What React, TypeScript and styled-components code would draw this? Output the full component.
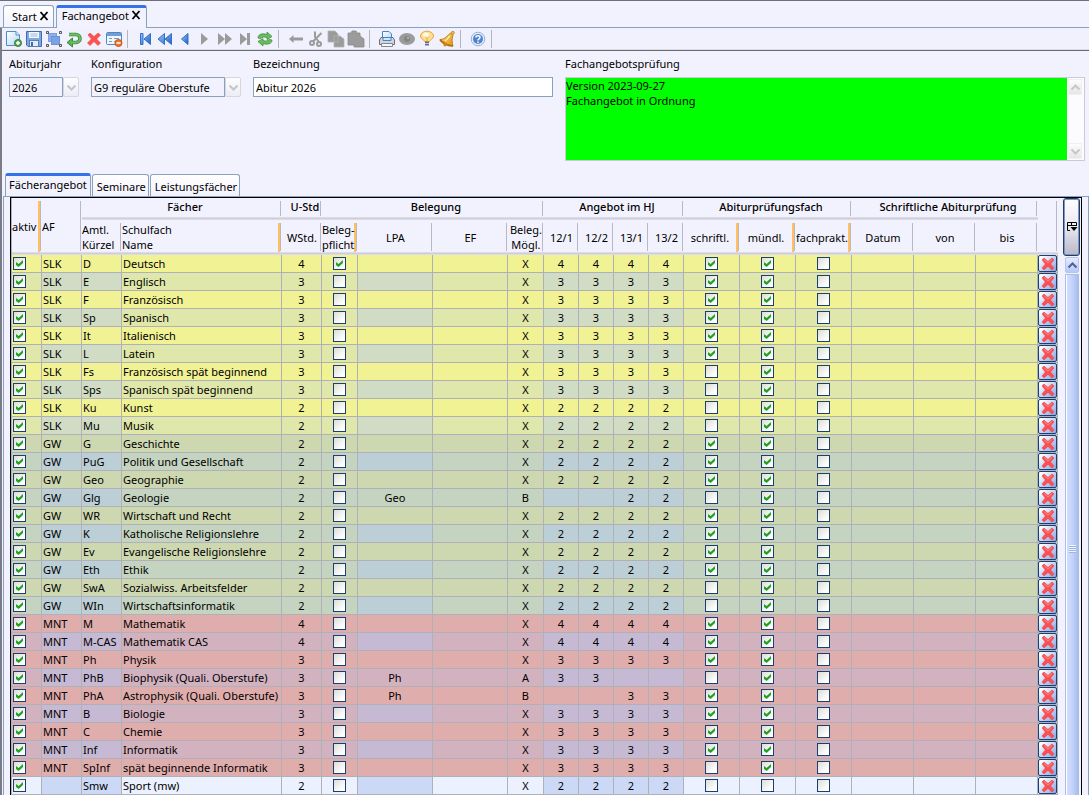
import React, { useState } from "react";
import styled, { createGlobalStyle, css } from "styled-components";

const GlobalStyle = createGlobalStyle`
  * { box-sizing: border-box; }
  body {
    margin: 0;
    background: #f2f2fe;
    color: #000;
    font: 11px/15px "Noto Sans", "Segoe UI", sans-serif;
  }
  button, input, select, textarea { font: inherit; color: inherit; margin: 0; border-radius: 0; }
`;

const LINE = "#8ba2bf";
const NAVY = "#1b3f73";

const Window = styled.div`
  height: 100vh;
  display: flex;
  flex-direction: column;
  overflow: hidden;
  border-top: 1px solid #6f6f7a;
`;

const DocTabs = styled.nav`
  display: flex;
  align-items: flex-end;
  gap: 2px;
  height: 27px;
  padding: 4px 3px 0;
  border-bottom: 1px solid ${LINE};
`;

const DocTab = styled.div<{ $active?: boolean }>`
  display: flex;
  align-items: center;
  gap: 2px;
  height: ${(p) => (p.$active ? 23 : 22)}px;
  margin-bottom: ${(p) => (p.$active ? -1 : 0)}px;
  padding: ${(p) => (p.$active ? "0 5px 5px" : "0 4px 0 8px")};
  border: 1px solid ${LINE};
  border-bottom: 0;
  border-radius: 3px 3px 0 0;
  background: ${(p) => (p.$active ? "#f2f2fe" : "linear-gradient(#fff, #f2f2fe)")};
  ${(p) => p.$active && css`border-top: 3px solid #3472ea;`}
`;

const PlainButton = styled.button`
  display: flex;
  align-items: center;
  justify-content: center;
  padding: 0;
  border: 0;
  background: none;
`;

const CloseButton = styled(PlainButton)`
  padding-bottom: 2px;
`;

const Body = styled.div`
  flex: 1;
  min-height: 0;
  display: flex;
  flex-direction: column;
  border-left: 2px solid #7b7b88;
`;

const Toolbar = styled.div`
  display: flex;
  align-items: center;
  height: 23px;
  padding-left: 2px;
  flex: none;
  border-bottom: 1px solid #6a6a72;
  background: linear-gradient(#f0f1fc 21px, #c6c6d0);
`;

const ToolGroup = styled.div`
  display: flex;
  align-items: center;
  height: 18px;
  padding-right: 3px;
  margin-right: 7px;
  border-right: 1px solid #b4b4bf;
`;

const ToolButton = styled(PlainButton)`
  width: 20px;
  height: 20px;
`;

const Form = styled.div`
  flex: none;
  display: grid;
  grid-template-columns: 70px 150px 300px 1fr;
  gap: 12px;
  padding: 5px 4px 12px 7px;
`;

const Field = styled.div`
  display: flex;
  flex-direction: column;
  gap: 6px;
`;

const Combo = styled.div`
  display: flex;
  height: 20px;
`;

const Select = styled.select`
  flex: 1;
  min-width: 0;
  appearance: none;
  padding: 0 2px;
  border: 1px solid ${LINE};
  background: #f2f2fe;
`;

const ComboArrow = styled.span`
  display: flex;
  align-items: center;
  justify-content: center;
  width: 16px;
  border: 1px solid #d6d6e0;
  border-radius: 2px;
  background: linear-gradient(#fdfdff, #ececf4);
`;

const TextInput = styled.input`
  height: 20px;
  padding: 0 2px;
  border: 1px solid ${LINE};
  background: #fff;
`;

const CheckBoxed = styled.div`
  display: flex;
  height: 84px;
  border: 1px solid #cacad8;
`;

const Report = styled.textarea`
  flex: 1;
  padding: 0;
  border: 0;
  resize: none;
  overflow: hidden;
  background: #00ff00;
`;

const MutedScroll = styled.div`
  display: flex;
  flex-direction: column;
  justify-content: space-between;
  width: 17px;
  padding: 1px 2px 1px 1px;
  background: #fcfcff;
`;

const MutedArrow = styled(PlainButton)`
  height: 16px;
  border: 1px solid #f0f0f4;
  background: linear-gradient(#fdfdfd, #e6e6ea);
`;

const PanelTabs = styled.div`
  flex: none;
  display: flex;
  align-items: flex-end;
  gap: 1px;
  height: 23px;
  padding-left: 3px;
`;

const PanelTab = styled.button<{ $active?: boolean }>`
  height: ${(p) => (p.$active ? 23 : 22)}px;
  padding: ${(p) => (p.$active ? "0 3px 4px" : "2px 2px 0 4px")};
  border: 1px solid ${LINE};
  border-bottom: 0;
  border-radius: 3px 3px 0 0;
  background: ${(p) => (p.$active ? "#f2f2fe" : "linear-gradient(#fff, #f2f2fe)")};
  ${(p) => p.$active && css`border-top: 3px solid #3472ea;`}
`;

const Panel = styled.div`
  flex: 1;
  min-height: 0;
  display: flex;
  margin-left: 1px;
  padding: 0 6px 0 6px;
  border: 1px solid ${LINE};
  border-bottom: 0;
`;

const GridFrame = styled.div`
  flex: 1;
  min-width: 0;
  display: flex;
  gap: 5px;
  overflow: hidden;
  border: 1px solid #000;
  border-bottom: 0;
`;

const TableArea = styled.div`
  flex: 1;
  min-width: 0;
  border-left: 1px solid #b0b0b8;
`;

const Table = styled.table`
  width: 100%;
  table-layout: fixed;
  border-collapse: separate;
  border-spacing: 0;
`;

const Col = styled.col<{ $w?: number }>`
  width: ${(p) => (p.$w ? `${p.$w}px` : "auto")};
`;

const sep = "linear-gradient(#b9b9c6, #b9b9c6) no-repeat right 1px top 3px / 1px calc(100% - 7px)";
const orange = "linear-gradient(#ffc062, #ffc062) no-repeat right 2px top 3px / 2px calc(100% - 6px)";
const rule = "linear-gradient(#e2e2ec, #cfcfdb 50%, #e2e2ec) no-repeat left bottom / 100% 3px";

const HeadCell = styled.th<{ $orange?: boolean; $left?: boolean }>`
  height: 35px;
  padding: 2px ${(p) => (p.$orange && !p.$left ? 4 : 0)}px 3px 0;
  font-weight: 400;
  white-space: pre;
  overflow: hidden;
  text-align: ${(p) => (p.$left ? "left" : "center")};
  vertical-align: middle;
  background: ${(p) => (p.$orange ? `${orange}, ` : "")}${sep}, ${rule};
`;

const GroupCell = styled.th`
  height: 22px;
  padding: 0 0 5px 6px;
  font-weight: 500;
  white-space: nowrap;
  background: ${sep}, ${rule};
`;

type Shade = { base: string; alt: string; mark: string };
const SHADES: Record<string, Shade> = {
  SLK: { base: "#f1f294", alt: "#dfe7aa", mark: "#d0dcc4" },
  GW: { base: "#cdd7b0", alt: "#c5d3c1", mark: "#bcced6" },
  MNT: { base: "#e0adad", alt: "#d3b2c0", mark: "#c6b9d3" },
  "": { base: "#f6f6ff", alt: "#ebf1ff", mark: "#ccd9f6" },
};

const Row = styled.tr<{ $bg: string }>`
  background: ${(p) => p.$bg};
`;

const Cell = styled.td<{ $bg?: string; $left?: boolean }>`
  height: 18px;
  padding: 0 ${(p) => (p.$left ? 1 : 0)}px;
  line-height: 17px;
  border-right: 1px solid #b0b0b8;
  border-bottom: 1px solid #b0b0b8;
  text-align: ${(p) => (p.$left ? "left" : "center")};
  white-space: nowrap;
  background: ${(p) => p.$bg || "transparent"};
`;

const Tick = styled.input`
  appearance: none;
  display: block;
  width: 13px;
  height: 13px;
  margin: 0 auto;
  border: 1px solid ${NAVY};
  background: linear-gradient(135deg, #dcdcd7, #fff 80%);
  &:checked::before {
    content: "";
    display: block;
    width: 7px;
    height: 7px;
    margin: 2px;
    background: #21a121;
    clip-path: polygon(0 29%, 0 71%, 38% 100%, 100% 43%, 100% 0, 38% 57%);
  }
`;

const TickCell = styled(Cell)<{ $start?: boolean }>`
  ${(p) => p.$start && css`padding-left: 1px; ${Tick} { margin-left: 0; }`}
`;

const DeleteButton = styled(PlainButton)`
  width: 19px;
  height: 17px;
  border: 1px solid ${NAVY};
  border-radius: 2px;
  background: linear-gradient(135deg, #fff 10%, #c6d6fa 50%, #86a4e4);
`;

const ScrollColumn = styled.div`
  width: 18px;
  padding-right: 1px;
  display: flex;
  flex-direction: column;
`;

const CornerButton = styled(PlainButton)`
  height: 58px;
  border: 1px solid ${NAVY};
  border-radius: 3px;
  box-shadow: inset 0 0 0 1px #8795b4;
  background: linear-gradient(#fff, #e8e8f2 50%, #b8b8c8);
`;

const ScrollUp = styled(PlainButton)`
  height: 16px;
  margin: 1px 1px 1px 2px;
  border: 1px solid #b4c4ec;
  border-radius: 2px;
  background: linear-gradient(#e4ecff, #b6c8f4);
`;

const Thumb = styled.div`
  flex: 1;
  display: flex;
  justify-content: center;
  align-items: center;
  margin: 0 1px 0 2px;
  padding-top: 28px;
  border: 1px solid #a9bfea;
  border-bottom: 0;
  box-shadow: inset 1px 0 #fff;
  background: linear-gradient(90deg, #d4e0fe, #c4d4fa 50%, #a8bdec);
`;

const Grip = styled.div`
  width: 7px;
  height: 8px;
  background: repeating-linear-gradient(#eef3ff 0 1px, #9db4e6 1px 2px);
`;

type IconProps = { children: React.ReactNode };
const Icon = ({ children }: IconProps) => (
  <svg width="18" height="18" viewBox="0 0 18 18" aria-hidden="true">
    <defs>
      <linearGradient id="blue" x1="0" y1="0" x2="1" y2="1">
        <stop offset="0" stopColor="#9cc6f4" /><stop offset="1" stopColor="#1f5fc0" />
      </linearGradient>
      <linearGradient id="page" x1="0" y1="0" x2="1" y2="1">
        <stop offset="0" stopColor="#fff" /><stop offset="1" stopColor="#b4d8f6" />
      </linearGradient>
      <linearGradient id="gold" x1="0" y1="0" x2="1" y2="1">
        <stop offset="0" stopColor="#ffe58a" /><stop offset="1" stopColor="#e09010" />
      </linearGradient>
    </defs>
    {children}
  </svg>
);

const GREY = "#9b9b9b";

const Cross = ({ size = 14 }: { size?: number }) => (
  <svg width={size} height={size} viewBox="0 0 14 14" aria-hidden="true">
    <path d="M1 3 3 1 7 4.600 11 1 13 3 9.600 7 13 11 11 13 7 9.400 3 13 1 11 4.400 7Z" fill="#fb5050" stroke="#ee4444" strokeWidth=".6" strokeLinejoin="round" />
    <path d="M3 2.500 7 6 11 2.500" fill="none" stroke="#ff8a80" />
  </svg>
);

const CloseMark = () => (
  <svg width="10" height="10" viewBox="0 0 10 10" aria-hidden="true">
    <path d="M1.500 1 8.500 9M8.500 1 1.500 9" stroke="#000" strokeWidth="1.800" />
  </svg>
);

const Chevron = ({ up, color, size = 9 }: { up?: boolean; color: string; size?: number }) => (
  <svg width={size} height={size} viewBox="0 0 9 9" aria-hidden="true">
    <path d={up ? "M.5 6.500 4.500 2.500 8.500 6.500" : "M.5 2.500 4.500 6.500 8.500 2.500"} fill="none" stroke={color} strokeWidth="2" />
  </svg>
);

const TOOLS: { label: string; icon: React.ReactNode }[][] = [
  [
    {
      label: "Neu",
      icon: (
        <>
          <path d="M1.500 1.500H11L14.500 5V15.500H1.500Z" fill="url(#page)" stroke="#4d8cc8" />
          <path d="M11 1.500V5H14.500" fill="#e8f4ff" stroke="#4d8cc8" />
          <circle cx="13" cy="13" r="3.500" fill="#5aa552" stroke="#3b7e3a" />
          <path d="M13 11V15M11 13H15" stroke="#fff" strokeWidth="1.400" />
        </>
      ),
    },
    {
      label: "Speichern",
      icon: (
        <>
          <path d="M1.500 1.500H16.500V16.500H3L1.500 15Z" fill="#7fa8e0" stroke="#3d6cb4" />
          <rect x="4" y="2" width="10" height="6" fill="#f2f7fe" />
          <path d="M5.500 4H12.500M5.500 6H12.500" stroke="#9db8dc" />
          <rect x="4.500" y="10.500" width="9" height="6" fill="#e4ecf4" stroke="#5b7fae" />
          <rect x="6" y="12" width="2" height="4" fill="#3d6cb4" />
        </>
      ),
    },
    {
      label: "Auswahl",
      icon: (
        <>
          <rect x="3.500" y="3.500" width="8" height="8" fill="#8db0ec" stroke="#7b9fe0" />
          <rect x="6.500" y="6.500" width="8" height="8" fill="#7ba2e4" stroke="#6a92d8" />
          <path d="M1.500 1.500H3.500V3.500H1.500ZM14.500 1.500H16.500V3.500H14.500ZM1.500 14.500H3.500V16.500H1.500ZM14.500 14.500H16.500V16.500H14.500Z" fill="#eee" stroke="#555" />
        </>
      ),
    },
    {
      label: "Rückgängig",
      icon: (
        <>
          <path d="M4 4.500H11A4 4 0 0 1 11 12.500H7" fill="none" stroke="#3c8a3c" strokeWidth="3.600" />
          <path d="M7.500 8V17L2 12.500Z" fill="#5cb055" stroke="#3c8a3c" />
          <path d="M4 4.500H11A4 4 0 0 1 11 12.500H6" fill="none" stroke="#74c069" strokeWidth="1.800" />
        </>
      ),
    },
    { label: "Löschen", icon: <path d="M3 5 5 3 9 6.600 13 3 15.500 5 11.600 9 15.500 13 13 15.500 9 11.600 5 15.500 2.500 13 6.400 9Z" fill="#fb5252" stroke="#ee4444" strokeWidth=".6" strokeLinejoin="round" /> },
    {
      label: "Formular",
      icon: (
        <>
          <rect x="1.500" y="2.500" width="15" height="12" rx="1" fill="#eef5fd" stroke="#5585bd" />
          <path d="M2 4.500H16" stroke="#6f9fd8" strokeWidth="3" />
          <path d="M4 8.500H7M9 8.500H14M4 11.500H7M9 11.500H11" stroke="#7c9cc0" />
          <circle cx="13.500" cy="13" r="3.500" fill="#f0772e" stroke="#c8541a" />
          <path d="M11.500 13H15.500" stroke="#fff" strokeWidth="1.500" />
        </>
      ),
    },
  ],
  [
    { label: "Erster", icon: <path d="M4.500 3.500H7V14.500H4.500ZM14.500 3.500V14.500L8 9Z" fill="url(#blue)" stroke="#2f6fce" /> },
    { label: "Schnell zurück", icon: <path d="M8.500 3.500V14.500L2 9ZM15.500 3.500V14.500L9 9Z" fill="url(#blue)" stroke="#2f6fce" /> },
    { label: "Zurück", icon: <path d="M12 3.500V14.500L5.500 9Z" fill="url(#blue)" stroke="#2f6fce" /> },
    { label: "Vor", icon: <path d="M5 3V15L12 9Z" fill={GREY} /> },
    { label: "Schnell vor", icon: <path d="M2 3V15L9 9ZM9 3V15L16 9Z" fill={GREY} /> },
    { label: "Letzter", icon: <path d="M4 3V15L11 9ZM11 3H14V15H11Z" fill={GREY} /> },
    {
      label: "Aktualisieren",
      icon: (
        <path d="M2 8C2 4 7 3 11 4.500V2L16 6.500 11 9.500V7.500C8 6.500 6 7 5 8.500ZM16 10C16 14 11 15 7 13.500V16L2 11.500 7 8.700V10.500C10 11.500 12 11 13 9.500Z" fill="#6cbd62" stroke="#3c913c" strokeWidth=".8" />
      ),
    },
  ],
  [
    { label: "Pfeil", icon: <path d="M2 9 6.500 5V7.500H16V10.500H6.500V13Z" fill={GREY} /> },
    {
      label: "Ausschneiden",
      icon: (
        <g fill="none" stroke={GREY} strokeWidth="2">
          <path d="M8 1.500V7L12 12M14.500 3 6 11.500" />
          <circle cx="5" cy="13" r="2" /><circle cx="12" cy="14" r="2" />
        </g>
      ),
    },
    { label: "Kopieren", icon: <path d="M1 1H8L11 4V12H1ZM7 6H13L17 9V17H7Z" fill={GREY} stroke="#b4b4b4" strokeWidth=".8" /> },
    { label: "Einfügen", icon: <path d="M1 3H4L5 1H9L10 3H13V6L17 9V17H7V15H1Z" fill={GREY} stroke="#8b8b8b" strokeWidth=".8" /> },
  ],
  [
    {
      label: "Drucken",
      icon: (
        <>
          <path d="M4.500 9V1.500H11L13.500 4V9" fill="url(#page)" stroke="#4585c8" />
          <path d="M3 7.500H15L16.500 10V14.500H1.500V10Z" fill="#d4d6de" stroke="#6b6d78" />
          <path d="M5 7.500H13V10.500H5Z" fill="#cfe5f8" stroke="#4585c8" />
          <path d="M3.500 13.500H14.500V16.500H3.500Z" fill="#f8f8fa" stroke="#85878f" />
        </>
      ),
    },
    {
      label: "Ansicht",
      icon: (
        <>
          <ellipse cx="9" cy="9" rx="8" ry="6" fill={GREY} />
          <circle cx="9" cy="9" r="3" fill="#858585" />
          <circle cx="10" cy="8" r="1" fill="#bbb" />
        </>
      ),
    },
    {
      label: "Hinweis",
      icon: (
        <>
          <path d="M6.500 11.500C6.500 9.500 2.500 9.500 2.500 6A6.500 4.800 0 0 1 15.500 6C15.500 9.500 11.500 9.500 11.500 11.500Z" fill="#ffdf8c" stroke="#eaa440" />
          <ellipse cx="8" cy="5" rx="3" ry="2.400" fill="#fffbe4" />
          <path d="M7 6.500 9 8.500 11 6.500M9 8.500V11" fill="none" stroke="#e8963a" strokeWidth=".8" />
          <path d="M7 11.500H11V15.500H7Z" fill="#6c6f7c" />
          <path d="M7 13.500H11" stroke="#c0c4d0" />
        </>
      ),
    },
    {
      label: "Alarm",
      icon: (
        <>
          <path d="M12.500 3 15 5.500C13.500 9 14 12.500 15 16L9 14 2 9.500C7 9.500 9 6 12.500 3Z" fill="url(#gold)" stroke="#bf7d14" strokeLinejoin="round" />
          <path d="M2 9.500C3 12.500 10 16.500 15 16" fill="none" stroke="#b06c0c" strokeWidth="1.500" />
          <path d="M11.500 6C10.500 8 9 10 7 11" fill="none" stroke="#fff3b8" strokeWidth="1.200" />
          <circle cx="14.800" cy="2.800" r="1.500" fill="#f0c04c" stroke="#bf7d14" strokeWidth=".8" />
          <circle cx="7" cy="14.800" r="1.600" fill="#c8861c" />
        </>
      ),
    },
  ],
  [
    {
      label: "Hilfe",
      icon: (
        <>
          <circle cx="9" cy="9" r="6.800" fill="#e6effb" stroke="#8fb2e0" />
          <circle cx="9" cy="9" r="5" fill="#4f83cc" />
          <path d="M7 7.500C7 5.300 11 5.300 11 7.500 11 9 9 8.800 9 10.500M9 11.500V13" fill="none" stroke="#fff" strokeWidth="1.500" />
        </>
      ),
    },
  ],
];

type Subject = {
  af: string;
  code: string;
  name: string;
  hours: number;
  lpa?: string;
  option?: string;
  terms?: string;
  required?: boolean;
  written: boolean;
  oral?: boolean;
};

const s = (af: string, code: string, name: string, hours: number, written: boolean, more: Partial<Subject> = {}): Subject => ({
  af, code, name, hours, written, option: "X", terms: String(hours).repeat(4), oral: true, ...more,
});

const SUBJECTS: Subject[] = [
  s("SLK", "D", "Deutsch", 4, true, { required: true }),
  s("SLK", "E", "Englisch", 3, true),
  s("SLK", "F", "Französisch", 3, true),
  s("SLK", "Sp", "Spanisch", 3, true),
  s("SLK", "It", "Italienisch", 3, true),
  s("SLK", "L", "Latein", 3, true),
  s("SLK", "Fs", "Französisch spät beginnend", 3, false),
  s("SLK", "Sps", "Spanisch spät beginnend", 3, false),
  s("SLK", "Ku", "Kunst", 2, false),
  s("SLK", "Mu", "Musik", 2, false),
  s("GW", "G", "Geschichte", 2, true),
  s("GW", "PuG", "Politik und Gesellschaft", 2, true),
  s("GW", "Geo", "Geographie", 2, true),
  s("GW", "Glg", "Geologie", 2, false, { lpa: "Geo", option: "B", terms: "  22" }),
  s("GW", "WR", "Wirtschaft und Recht", 2, true),
  s("GW", "K", "Katholische Religionslehre", 2, true),
  s("GW", "Ev", "Evangelische Religionslehre", 2, true),
  s("GW", "Eth", "Ethik", 2, true),
  s("GW", "SwA", "Sozialwiss. Arbeitsfelder", 2, false),
  s("GW", "WIn", "Wirtschaftsinformatik", 2, false),
  s("MNT", "M", "Mathematik", 4, true),
  s("MNT", "M-CAS", "Mathematik CAS", 4, true),
  s("MNT", "Ph", "Physik", 3, true),
  s("MNT", "PhB", "Biophysik (Quali. Oberstufe)", 3, false, { lpa: "Ph", option: "A", terms: "33  " }),
  s("MNT", "PhA", "Astrophysik (Quali. Oberstufe)", 3, true, { lpa: "Ph", option: "B", terms: "  33" }),
  s("MNT", "B", "Biologie", 3, true),
  s("MNT", "C", "Chemie", 3, true),
  s("MNT", "Inf", "Informatik", 3, true),
  s("MNT", "SpInf", "spät beginnende Informatik", 3, false),
  s("", "Smw", "Sport (mw)", 2, false, { oral: false }),
];

const WIDTHS = [30, 40, 40, undefined, 40, 36, 75, 75, 36, 35, 35, 35, 35, 56, 56, 56, 62, 62, 62, 20];

const SubjectRow = ({ item, index }: { item: Subject; index: number }) => {
  const shade = SHADES[item.af];
  const alt = index % 2 === 1;
  const mark = alt ? shade.mark : undefined;
  const tick = (label: string, on?: boolean) => (
    <Tick type="checkbox" aria-label={`${item.name}: ${label}`} defaultChecked={on} />
  );
  return (
    <Row $bg={alt ? shade.alt : shade.base}>
      <TickCell $start>{tick("aktiv", true)}</TickCell>
      <Cell $left $bg={mark}>{item.af}</Cell>
      <Cell $left $bg={mark}>{item.code}</Cell>
      <Cell $left>{item.name}</Cell>
      <Cell>{item.hours}</Cell>
      <TickCell>{tick("Belegpflicht", item.required)}</TickCell>
      <Cell $bg={item.lpa ? undefined : mark}>{item.lpa}</Cell>
      <Cell />
      <Cell>{item.option}</Cell>
      {(item.terms || "").split("").map((t, i) => (
        <Cell key={i} $bg={mark}>{t.trim()}</Cell>
      ))}
      <TickCell>{tick("schriftlich", item.written)}</TickCell>
      <TickCell>{tick("mündlich", item.oral)}</TickCell>
      <TickCell>{tick("fachpraktisch")}</TickCell>
      <Cell />
      <Cell />
      <Cell />
      <Cell>
        <DeleteButton type="button" aria-label={`${item.name} löschen`}><Cross /></DeleteButton>
      </Cell>
    </Row>
  );
};

export default function App() {
  const [title, setTitle] = useState("Abitur 2026");
  return (
    <Window>
      <GlobalStyle />
      <DocTabs>
        <DocTab>Start<CloseButton type="button" aria-label="Start schließen"><CloseMark /></CloseButton></DocTab>
        <DocTab $active>Fachangebot<CloseButton type="button" aria-label="Fachangebot schließen"><CloseMark /></CloseButton></DocTab>
      </DocTabs>
      <Body>
        <Toolbar>
          {TOOLS.map((group, i) => (
            <ToolGroup key={i}>
              {group.map((tool) => (
                <ToolButton key={tool.label} type="button" aria-label={tool.label}><Icon>{tool.icon}</Icon></ToolButton>
              ))}
            </ToolGroup>
          ))}
        </Toolbar>
        <Form>
          <Field>
            <label htmlFor="year">Abiturjahr</label>
            <Combo>
              <Select id="year"><option>2026</option></Select>
              <ComboArrow><Chevron color="#c4c4cc" /></ComboArrow>
            </Combo>
          </Field>
          <Field>
            <label htmlFor="config">Konfiguration</label>
            <Combo>
              <Select id="config"><option>G9 reguläre Oberstufe</option></Select>
              <ComboArrow><Chevron color="#c4c4cc" /></ComboArrow>
            </Combo>
          </Field>
          <Field>
            <label htmlFor="title">Bezeichnung</label>
            <TextInput id="title" value={title} onChange={(e) => setTitle(e.target.value)} />
          </Field>
          <Field>
            <label htmlFor="report">Fachangebotsprüfung</label>
            <CheckBoxed>
              <Report id="report" readOnly value={"Version 2023-09-27\nFachangebot in Ordnung"} />
              <MutedScroll>
                <MutedArrow type="button" aria-label="Nach oben"><Chevron up color="#c8c8c8" /></MutedArrow>
                <MutedArrow type="button" aria-label="Nach unten"><Chevron color="#c8c8c8" /></MutedArrow>
              </MutedScroll>
            </CheckBoxed>
          </Field>
        </Form>
        <PanelTabs>
          <PanelTab type="button" $active>Fächerangebot</PanelTab>
          <PanelTab type="button">Seminare</PanelTab>
          <PanelTab type="button">Leistungsfächer</PanelTab>
        </PanelTabs>
        <Panel>
          <GridFrame>
            <TableArea>
              <Table>
                <colgroup>{WIDTHS.map((w, i) => <Col key={i} $w={w} />)}</colgroup>
                <thead>
                  <tr>
                    <HeadCell rowSpan={2} $left $orange>aktiv</HeadCell>
                    <HeadCell rowSpan={2} $left>AF</HeadCell>
                    <GroupCell colSpan={2}>Fächer</GroupCell>
                    <GroupCell>U-Std</GroupCell>
                    <GroupCell colSpan={4}>Belegung</GroupCell>
                    <GroupCell colSpan={4}>Angebot im HJ</GroupCell>
                    <GroupCell colSpan={3}>Abiturprüfungsfach</GroupCell>
                    <GroupCell colSpan={3}>Schriftliche Abiturprüfung</GroupCell>
                    <HeadCell rowSpan={2} />
                  </tr>
                  <tr>
                    <HeadCell $left>{"Amtl.\nKürzel"}</HeadCell>
                    <HeadCell $left $orange>{"Schulfach\nName"}</HeadCell>
                    <HeadCell>WStd.</HeadCell>
                    <HeadCell $left $orange>{"Beleg-\npflicht"}</HeadCell>
                    <HeadCell>LPA</HeadCell>
                    <HeadCell>EF</HeadCell>
                    <HeadCell>{"Beleg.\nMögl."}</HeadCell>
                    <HeadCell>12/1</HeadCell>
                    <HeadCell>12/2</HeadCell>
                    <HeadCell>13/1</HeadCell>
                    <HeadCell>13/2</HeadCell>
                    <HeadCell $orange>schriftl.</HeadCell>
                    <HeadCell $orange>mündl.</HeadCell>
                    <HeadCell $orange>fachprakt.</HeadCell>
                    <HeadCell>Datum</HeadCell>
                    <HeadCell>von</HeadCell>
                    <HeadCell>bis</HeadCell>
                  </tr>
                </thead>
                <tbody>
                  {SUBJECTS.map((item, i) => <SubjectRow key={item.code} item={item} index={i} />)}
                </tbody>
              </Table>
            </TableArea>
            <ScrollColumn>
              <CornerButton type="button" aria-label="Spalten wählen">
                <svg width="12" height="12" viewBox="0 0 12 12" aria-hidden="true">
                  <path d="M1.500 9.500V1.500H10.500V5M1.500 4.500H10.500M5.500 1.500V5M1.500 9.500H4" fill="none" stroke="#000" />
                  <path d="M4.500 6H11.500L8 10Z" />
                </svg>
              </CornerButton>
              <ScrollUp type="button" aria-label="Nach oben"><Chevron up color="#4a6390" /></ScrollUp>
              <Thumb><Grip /></Thumb>
            </ScrollColumn>
          </GridFrame>
        </Panel>
      </Body>
    </Window>
  );
}
